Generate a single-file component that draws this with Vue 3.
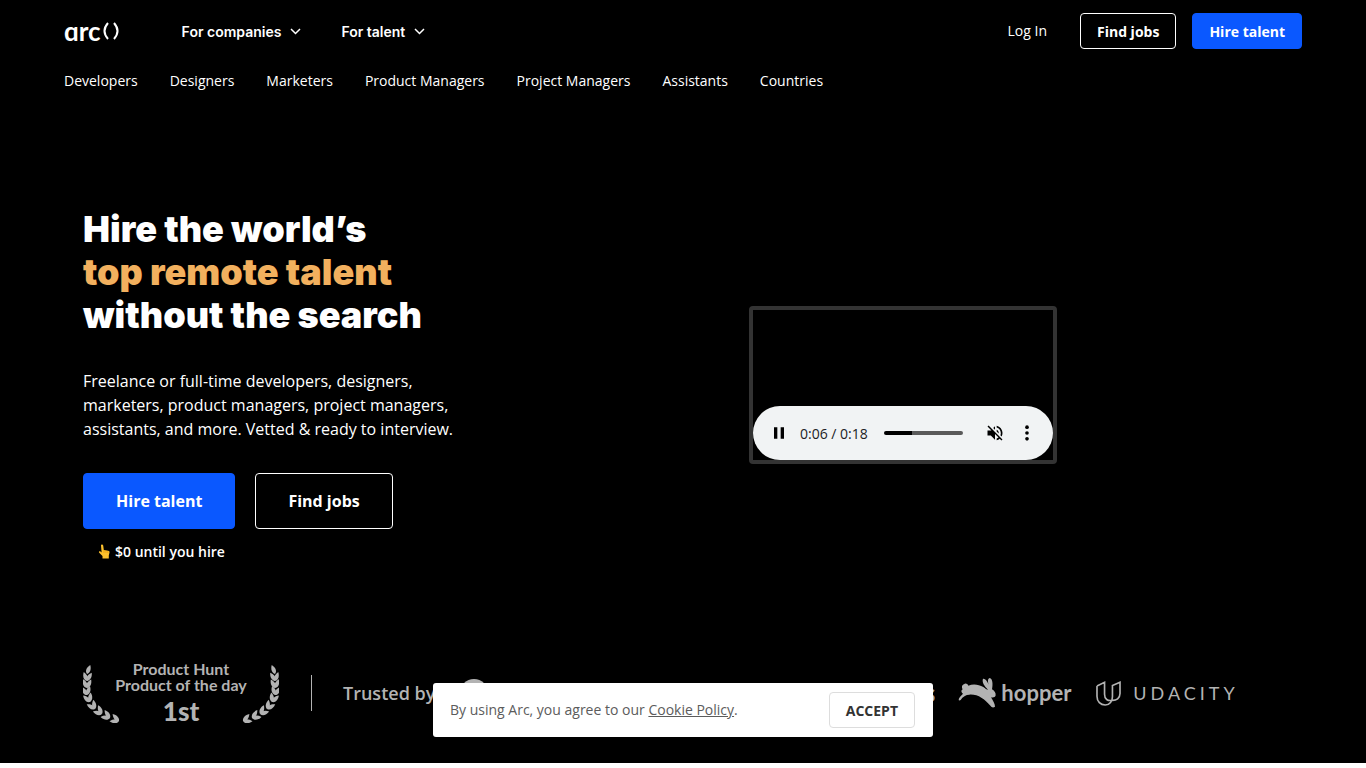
<template>
  <div class="page">
    <header class="header">
      <div class="topbar">
        <a href="#" class="logo" aria-label="Arc home">
          <span>ɑrc</span>
          <svg width="16" height="18" viewBox="0 0 16 18" aria-hidden="true">
            <path d="M5 1Q-2 9 5 17M11 1Q18 9 11 17" />
          </svg>
        </a>
        <nav class="main-nav">
          <button v-for="item in menus" :key="item" type="button" class="menu-button">
            {{ item }}
            <svg width="11" height="7" viewBox="0 0 11 7" aria-hidden="true">
              <path d="M1 1l4.500 4.500 4.500-4.500" />
            </svg>
          </button>
        </nav>
        <div class="account">
          <a href="#" class="login">Log In</a>
          <button type="button" class="btn btn-outline">Find jobs</button>
          <button type="button" class="btn btn-primary">Hire talent</button>
        </div>
      </div>
      <nav class="sub-nav">
        <a v-for="item in roles" :key="item" href="#">{{ item }}</a>
      </nav>
    </header>

    <main class="container">
      <section class="hero">
        <div class="hero-text">
          <h1>
            Hire the world’s<br />
            <span class="accent">top remote talent</span><br />
            without the search
          </h1>
          <p class="lead">
            Freelance or full-time developers, designers, marketers, product managers, project
            managers, assistants, and more. Vetted &amp; ready to interview.
          </p>
          <div class="hero-actions">
            <button type="button" class="btn btn-large btn-primary">Hire talent</button>
            <button type="button" class="btn btn-large btn-outline">Find jobs</button>
          </div>
          <p class="note">
            <svg width="12" height="16" viewBox="0 0 12 16" aria-hidden="true">
              <path
                fill="#fbc02d"
                d="M3 1.5C3 .3 5 .3 5.2 1.5L5.8 6l4.400.8c1 .2 1.500.8 1.300 1.800L10.800 11.500V14.500H4.500V12L1.200 8.800C.4 7.800 1.500 6.900 2.500 7.500L3.600 8.500Z"
              />
              <path fill="none" stroke="#e59600" stroke-width=".6" d="M6 6v3M8 6.500v2.500M9.800 7v2" />
            </svg>
            $0 until you hire
          </p>
        </div>

        <div class="hero-media">
          <div class="player">
            <div class="controls">
              <button type="button" class="icon-button" aria-label="Pause">
                <svg width="20" height="20" viewBox="0 0 24 24">
                  <path d="M6 19h4V5H6v14zm8-14v14h4V5h-4z" />
                </svg>
              </button>
              <span class="time">0:06 / 0:18</span>
              <input v-model="position" class="seek" type="range" min="0" max="18" aria-label="Seek" />
              <button type="button" class="icon-button" aria-label="Unmute">
                <svg width="20" height="20" viewBox="0 0 24 24">
                  <path
                    d="M16.500 12c0-1.770-1.020-3.290-2.500-4.030v2.210l2.450 2.450c.03-.2.050-.41.050-.63zm2.500 0c0 .94-.2 1.820-.54 2.640l1.510 1.510C20.630 14.910 21 13.500 21 12c0-4.280-2.990-7.860-7-8.770v2.060c2.890.86 5 3.540 5 6.710zM4.270 3L3 4.270 7.730 9H3v6h4l5 5v-6.730l4.250 4.250c-.67.52-1.420.93-2.250 1.180v2.060c1.380-.31 2.630-.95 3.690-1.810L19.730 21 21 19.730l-9-9L4.270 3zM12 4L9.910 6.090 12 8.180V4z"
                  />
                </svg>
              </button>
              <button type="button" class="icon-button" aria-label="More options">
                <svg width="20" height="20" viewBox="0 0 24 24">
                  <circle cx="12" cy="5" r="2.200" />
                  <circle cx="12" cy="12" r="2.200" />
                  <circle cx="12" cy="19" r="2.200" />
                </svg>
              </button>
            </div>
          </div>
        </div>
      </section>

      <section class="trust">
        <div class="award">
          <svg
            v-for="side in ['left', 'right']"
            :key="side"
            :class="['laurel', side]"
            width="37"
            height="60"
            viewBox="0 0 37 60"
            aria-hidden="true"
          >
            <path
              v-for="(leaf, i) in leaves"
              :key="i"
              d="M0 0C-3.200-2-2.600-6 0-9.500C2.600-6 2.600-2 0 0Z"
              :transform="`translate(${leaf.x} ${leaf.y}) rotate(${leaf.angle})`"
            />
          </svg>
          <p class="award-text">
            <span>Product Hunt</span>
            <span>Product of the day</span>
            <strong>1st</strong>
          </p>
        </div>
        <div class="brands">
          <span class="trusted">Trusted by</span>
          <span class="brand spotify">
            <svg width="28" height="28" viewBox="0 0 28 28" aria-label="Spotify">
              <circle cx="14" cy="14" r="14" fill="#b3b3b3" />
              <path
                d="M6 10q9-3 17 2M7 15q8-2 14 2M8 19q7-2 11 2"
                fill="none"
                stroke="#000"
                stroke-width="2"
              />
            </svg>
          </span>
          <span class="brand fivestars">FiveStars</span>
          <span class="brand hopper">
            <svg width="38" height="30" viewBox="0 0 114 90" aria-hidden="true">
              <path
                d="M2 66C2 60 8 54 15 47C10 44 8 38 14 34C10 28 12 20 18 19C22 14 30 18 31 23C45 17 62 19 76 27C82 32 86 35 90 35C79 24 71 12 75 2C84 1 90 14 96 28C88 14 88 2 95 0C104 2 105 18 102 34C108 38 114 44 113 52C112 58 105 60 99 58C105 68 111 78 111 86C106 90 100 88 98 84C88 72 80 65 70 59C60 52 46 49 34 50C24 50 14 56 8 66C6 68 2 68 2 66Z"
              />
            </svg>
            <span>hopper</span>
          </span>
          <span class="brand udacity">
            <svg width="25" height="25" viewBox="0 0 76 76" aria-hidden="true">
              <path
                d="M3 15L26 4V40C26 56 36 61 48 59M3 15V46C3 63 14 73 28 73C42 73 50 61 50 48V14L73 4V38C73 52 62 60 48 59"
              />
            </svg>
            <span>UDACITY</span>
          </span>
        </div>
      </section>
    </main>

    <div v-if="showCookies" class="cookie">
      <p>By using Arc, you agree to our <a href="#">Cookie Policy</a>.</p>
      <button type="button" @click="showCookies = false">ACCEPT</button>
    </div>
  </div>
</template>

<script setup>
import { ref } from 'vue'

const menus = ['For companies', 'For talent']
const roles = [
  'Developers',
  'Designers',
  'Marketers',
  'Product Managers',
  'Project Managers',
  'Assistants',
  'Countries',
]

const position = ref(6)
const showCookies = ref(true)

// x, y and growth direction of each pair of laurel leaves
const stem = [
  [4, 18, 4],
  [4, 25, 0],
  [4, 32, -8],
  [7, 39, -22],
  [12, 46, -36],
  [19, 51, -50],
  [27, 55, -60],
  [36, 58, -68],
]
const leaves = [{ x: 4, y: 11, angle: 20 }]
stem.forEach(([x, y, angle]) => {
  leaves.push({ x, y, angle: angle - 24 }, { x, y, angle: angle + 26 })
})
</script>

<style>
body {
  margin: 0;
  background: #fff;
}
</style>

<style scoped>
.page {
  background: #000;
  color: #fff;
  font-family: 'Open Sans', sans-serif;
  font-size: 14px;
  line-height: 20px;
}
a {
  color: inherit;
  text-decoration: none;
}
button {
  margin: 0;
  font-family: inherit;
  cursor: pointer;
}
p,
h1 {
  margin: 0;
}
.header {
  padding: 0 64px;
}
.topbar {
  display: flex;
  align-items: center;
  height: 62px;
}
.logo {
  display: flex;
  align-items: center;
  gap: 2px;
  font-family: Lato, sans-serif;
  font-size: 26px;
  font-weight: 700;
}
.logo svg {
  fill: none;
  stroke: #fff;
  stroke-width: 2;
}
.main-nav {
  display: flex;
  gap: 40px;
  margin-left: 63px;
}
.menu-button {
  display: flex;
  align-items: center;
  gap: 9px;
  padding: 0;
  border: 0;
  background: none;
  color: #fff;
  font-family: Inter, sans-serif;
  font-size: 14px;
  font-weight: 600;
}
.menu-button svg {
  fill: none;
  stroke: #fff;
  stroke-width: 1.5;
}
.account {
  display: flex;
  align-items: center;
  gap: 16px;
  margin-left: auto;
}
.login {
  margin-right: 17px;
  font-weight: 500;
}
.btn {
  height: 36px;
  padding: 0 16px;
  border: 1px solid #fff;
  border-radius: 4px;
  color: #fff;
  font-size: 14px;
  font-weight: 700;
}
.btn-outline {
  background: #000;
}
.btn-primary {
  border-color: #0a58ff;
  background: #0a58ff;
}
.sub-nav {
  display: flex;
  gap: 32px;
  padding: 9px 0;
}
.container {
  max-width: 1200px;
  margin: 0 auto;
}
.hero {
  display: flex;
  align-items: center;
  padding: 108px 0 101px;
}
.hero-text {
  flex: 0 0 440px;
}
h1 {
  font-family: Inter, sans-serif;
  font-size: 36px;
  font-weight: 900;
  line-height: 43px;
}
.accent {
  color: #f2b05e;
}
.lead {
  max-width: 390px;
  margin-top: 32px;
  font-size: 16px;
  line-height: 24px;
}
.hero-actions {
  display: flex;
  gap: 20px;
  margin-top: 32px;
}
.btn-large {
  height: 56px;
  padding: 0 32px;
  font-size: 16px;
}
.note {
  display: flex;
  align-items: center;
  gap: 5px;
  margin-top: 13px;
  padding-left: 15px;
  font-weight: 600;
}
.hero-media {
  display: flex;
  flex: 1;
  justify-content: center;
}
.player {
  display: flex;
  align-items: flex-end;
  width: 300px;
  height: 150px;
  border: 4px solid #333;
  border-radius: 4px;
}
.controls {
  display: flex;
  align-items: center;
  box-sizing: border-box;
  width: 100%;
  height: 54px;
  padding: 0 10px;
  border-radius: 27px;
  background: #f1f3f4;
}
.icon-button {
  display: flex;
  align-items: center;
  justify-content: center;
  width: 32px;
  height: 32px;
  padding: 0;
  border: 0;
  background: none;
}
.time {
  margin-left: 5px;
  padding-top: 2px;
  color: #202124;
  white-space: nowrap;
}
.seek {
  flex: 1;
  min-width: 0;
  height: 4px;
  margin: 0 16px;
  border-radius: 2px;
  background: linear-gradient(to right, #000 36%, #5a5a5a 36%);
  appearance: none;
}
.seek::-webkit-slider-thumb {
  width: 4px;
  height: 4px;
  opacity: 0;
  appearance: none;
}
.trust {
  display: flex;
  align-items: center;
  padding-bottom: 40px;
  color: #b3b3b3;
}
.award {
  display: flex;
  align-items: center;
  justify-content: space-between;
  width: 196px;
  height: 60px;
}
.laurel {
  flex: none;
  fill: #b3b3b3;
}
.laurel.right {
  order: 2;
  transform: scaleX(-1);
}
.award-text {
  display: flex;
  flex: 1;
  flex-direction: column;
  align-items: center;
  /* the second line is wider than the gap between the laurels */
  margin: 0 -20px;
  font-family: Lato, sans-serif;
  font-size: 16px;
  font-weight: 700;
  line-height: 16px;
  white-space: nowrap;
}
.award-text strong {
  padding-top: 4px;
  font-size: 26px;
  font-weight: 900;
  line-height: 28px;
}
.brands {
  display: flex;
  align-items: center;
  flex: 1;
  margin-left: 32px;
  padding-left: 31px;
  border-left: 1px solid #b3b3b3;
  height: 36px;
  white-space: nowrap;
}
.trusted {
  font-size: 18px;
  font-weight: 600;
}
.brand {
  display: flex;
  align-items: center;
  font-weight: 700;
}
.spotify {
  margin-left: 25px;
}
.fivestars {
  justify-content: flex-end;
  width: 447px;
  font-size: 24px;
}
.hopper {
  gap: 5px;
  margin-left: 23px;
  font-family: Lato, sans-serif;
  font-size: 22px;
  fill: #b3b3b3;
}
.udacity {
  gap: 12px;
  margin-left: 25px;
  font-family: Lato, sans-serif;
  font-size: 18px;
  font-weight: 400;
  letter-spacing: 4px;
}
.udacity svg {
  fill: none;
  stroke: #b3b3b3;
  stroke-width: 5;
}
.cookie {
  position: fixed;
  bottom: 31px;
  left: 50%;
  display: flex;
  align-items: center;
  justify-content: space-between;
  box-sizing: border-box;
  width: 500px;
  max-width: 100%;
  height: 54px;
  padding: 0 18px 0 17px;
  border-radius: 3px;
  background: #fff;
  color: #5c5c5c;
  transform: translateX(-50%);
}
.cookie a {
  text-decoration: underline;
}
.cookie button {
  height: 36px;
  padding: 0 16px;
  border: 1px solid #ddd;
  border-radius: 4px;
  background: #fff;
  color: #333;
  font-size: 14px;
  font-weight: 700;
}
</style>
